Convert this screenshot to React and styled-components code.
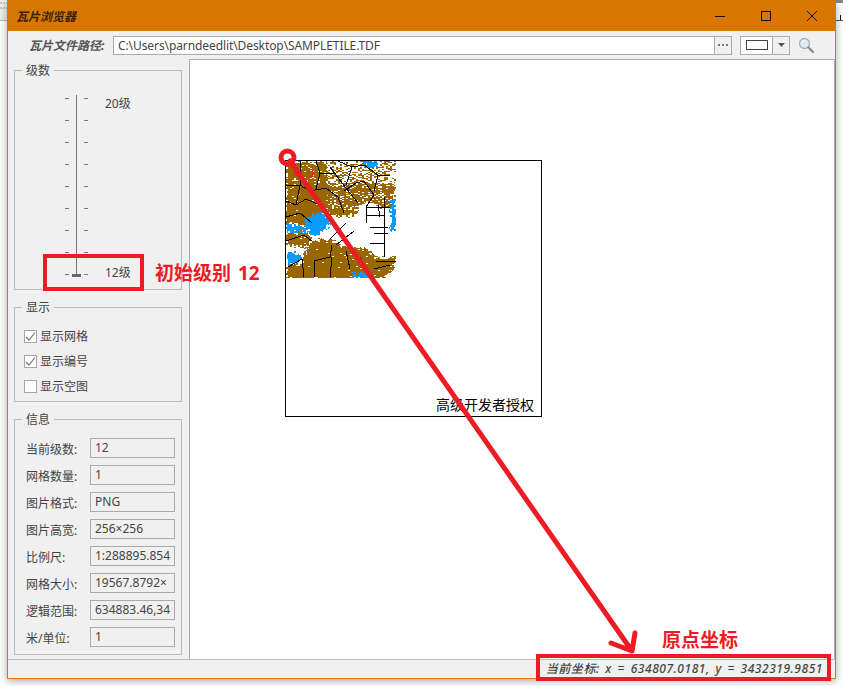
import styled, { createGlobalStyle } from "styled-components";

const sans = `"Noto Sans", "Noto Sans CJK SC", sans-serif`;

const infoRows = [
  ["当前级数:", "12"],
  ["网格数量:", "1"],
  ["图片格式:", "PNG"],
  ["图片高宽:", "256×256"],
  ["比例尺:", "1:288895.854"],
  ["网格大小:", "19567.8792×"],
  ["逻辑范围:", "634883.46,34"],
  ["米/单位:", "1"],
];

const checks = [
  ["显示网格", true],
  ["显示编号", true],
  ["显示空图", false],
];

// rough shapes of the tile picture, in tile pixels
const brownAreas = [
  [[0, 0], [41, 0], [51, 21], [68, 40], [72, 52], [54, 56], [39, 50], [28, 56], [24, 62], [0, 63]],
  [[41, 0], [110, 0], [110, 22], [105, 49], [94, 45], [79, 40], [71, 46], [68, 40], [51, 21]],
  [[20, 86], [24, 80], [44, 77], [56, 85], [66, 86], [81, 88], [90, 96], [110, 96], [106, 108], [98, 117], [0, 117], [0, 104], [16, 103]],
  [[0, 72], [18, 70], [24, 76], [20, 86], [0, 83]],
];

const blueAreas = [
  [[0, 63], [18, 65], [28, 63], [18, 70], [0, 70]],
  [[18, 58], [34, 51], [46, 59], [39, 68], [31, 74], [24, 74], [18, 63]],
  [[0, 91], [8, 91], [16, 96], [8, 103], [0, 103]],
  [[104, 38], [109, 38], [109, 69], [104, 69]],
  [[78, 0], [91, 0], [88, 7], [79, 5]],
  [[64, 112], [84, 110], [88, 117], [68, 117]],
];

const roads = [
  "M0 24H14L24 30L40 27L52 36L58 52",
  "M14 0V24L10 44",
  "M30 0L34 12L30 28",
  "M44 6L56 22L72 42",
  "M52 0L66 6L78 4L92 14L104 14",
  "M66 6L60 24",
  "M78 20L88 34L80 46L80 62",
  "M80 46H104",
  "M80 54H98",
  "M84 66H102",
  "M98 36V96",
  "M92 44L94 56",
  "M88 72H102",
  "M84 82H98",
  "M60 62L44 78",
  "M68 70L50 84",
  "M0 56L14 52L26 62",
  "M0 80L18 74L26 80",
  "M2 106L16 98L18 116",
  "M28 100L44 96L46 84",
  "M46 96L44 116",
  "M28 100V116",
  "M60 90L64 108",
  "M74 96L82 112",
  "M90 100H110",
  "M20 38L34 44L48 66",
  "M92 14L88 30",
  "M0 40L10 44L20 38",
  "M58 30L70 22L78 20",
  "M34 12H50",
  "M88 108L104 104",
];

const noise = (x, y, seed = 1) => {
  const v = Math.sin(x * 12.9898 + y * 78.233 + seed * 37.719) * 43758.5453;
  return v - Math.floor(v);
};

const inside = (poly, x, y) => {
  let hit = false;
  for (let i = 0, j = poly.length - 1; i < poly.length; j = i++) {
    const [ax, ay] = poly[i];
    const [bx, by] = poly[j];
    if (ay > y !== by > y && x < ((bx - ax) * (y - ay)) / (by - ay) + ax) hit = !hit;
  }
  return hit;
};

const tilePixel = (x, y) => {
  const sx = x + (noise(x >> 1, y >> 1, 2) - 0.5) * 4;
  const sy = y + (noise(x >> 1, y >> 1, 3) - 0.5) * 4;
  if (blueAreas.some((p) => inside(p, sx, sy))) return "blue";
  if (brownAreas.some((p) => inside(p, sx, sy))) {
    // top of the tile is much more broken up than the bottom, holes come in clumps
    let holes = 0.02;
    if (y < 22) holes = x > 40 ? 0.62 : 0.1;
    else if (y < 50) holes = x > 40 ? 0.2 : 0.03;
    return noise(x >> 1, y, 4) < holes ? "" : "brown";
  }
  return "";
};

const buildRuns = () => {
  const runs = { brown: "", blue: "" };
  for (let y = 0; y < 117; y++) {
    let start = 0;
    let current = "";
    for (let x = 0; x <= 110; x++) {
      const px = x < 110 ? tilePixel(x, y) : "";
      if (px !== current) {
        if (current) runs[current] += `M${start} ${y}H${x}V${y + 1}H${start}Z`;
        start = x;
        current = px;
      }
    }
  }
  return runs;
};

const tileRuns = buildRuns();

function TileMap() {
  return (
    <MapPicture viewBox="0 0 110 117" width="110" height="117">
      <path d={tileRuns.brown} fill="#996600" />
      <path d={tileRuns.blue} fill="#0a9bff" />
      {roads.map((d) => (
        <path key={d} d={d} fill="none" stroke="#000" strokeWidth="1" />
      ))}
      <rect x="8.5" y="8.5" width="3" height="6" fill="none" stroke="#e22" />
      <rect x="23.5" y="8.5" width="3" height="7" fill="none" stroke="#e22" />
    </MapPicture>
  );
}

export default function App() {
  const ticks = Array.from({ length: 9 }, (_, i) => i);
  return (
    <>
      <GlobalStyle />
      <Page>
        <Backdrop viewBox="0 0 843 24" width="843" height="24">
          <path d="M0 0H7V21H0Z" fill="#eee" />
          <path d="M0 3H7M0 8H7" stroke="#8aa" strokeDasharray="2 1" />
          <path d="M0 20.5H7" stroke="#bbb" />
          <path d="M836 0H843V3H836Z" fill="#888" />
          <path d="M836 20.5H843" stroke="#555" />
          <path d="M840.5 15V20" stroke="#111" />
        </Backdrop>
        <Window>
          <TitleBar>
            <Title>瓦片浏览器</Title>
            <WindowButtons>
              <svg width="46" height="30" viewBox="0 0 46 30">
                <path d="M18 15.5H28" stroke="#111" />
              </svg>
              <svg width="46" height="30" viewBox="0 0 46 30">
                <rect x="18.5" y="10.5" width="9" height="9" fill="none" stroke="#111" />
              </svg>
              <svg width="46" height="30" viewBox="0 0 46 30">
                <path d="M18 10L28 20M28 10L18 20" stroke="#111" />
              </svg>
            </WindowButtons>
          </TitleBar>
          <Toolbar>
            <PathLabel>瓦片文件路径:</PathLabel>
            <PathBox>
              <PathText>C:\Users\parndeedlit\Desktop\SAMPLETILE.TDF</PathText>
              <DotsButton>
                <svg width="11" height="3" viewBox="0 0 11 3">
                  <path d="M0 0h2v2H0zM4 0h2v2H4zM8 0h2v2H8z" fill="#777" />
                </svg>
              </DotsButton>
            </PathBox>
            <Combo>
              <ComboValue>
                <ComboSwatch />
              </ComboValue>
              <ComboArrow>
                <svg width="7" height="4" viewBox="0 0 7 4">
                  <path d="M0 0H7L3.5 4Z" fill="#555" />
                </svg>
              </ComboArrow>
            </Combo>
            <SearchIcon viewBox="0 0 16 17" width="16" height="17">
              <circle cx="6.5" cy="6.5" r="5" fill="#dfeaf3" stroke="#9fb2c2" strokeWidth="1.3" />
              <path d="M3.5 5.5a3.4 3.4 0 0 1 3-2" fill="none" stroke="#fff" />
              <path d="M10.5 10.5L15 15" stroke="#8b8b8b" strokeWidth="2.2" strokeLinecap="round" />
            </SearchIcon>
          </Toolbar>
          <Main>
            <Sidebar>
              <Group $height={220}>
                <Legend>级数</Legend>
                <Slider>
                  <TickColumn>
                    {ticks.map((t) => (
                      <Tick key={t} />
                    ))}
                  </TickColumn>
                  <Track>
                    <Thumb />
                  </Track>
                  <TickColumn>
                    {ticks.map((t) => (
                      <Tick key={t} />
                    ))}
                  </TickColumn>
                  <LevelLabels>
                    <span>20级</span>
                    <span>12级</span>
                  </LevelLabels>
                </Slider>
              </Group>
              <Group $height={95}>
                <Legend>显示</Legend>
                <CheckList>
                  {checks.map(([label, on]) => (
                    <CheckRow key={label}>
                      <CheckBox>
                        {on && (
                          <svg width="11" height="11" viewBox="0 0 11 11">
                            <path d="M1 6L4 9L10 1.5" fill="none" stroke="#777" strokeWidth="1.2" />
                          </svg>
                        )}
                      </CheckBox>
                      <CheckText>{label}</CheckText>
                    </CheckRow>
                  ))}
                </CheckList>
              </Group>
              <Group $height={236}>
                <Legend>信息</Legend>
                <InfoList>
                  {infoRows.map(([label, value]) => (
                    <InfoRow key={label}>
                      <InfoLabel>{label}</InfoLabel>
                      <InfoValue>{value}</InfoValue>
                    </InfoRow>
                  ))}
                </InfoList>
              </Group>
            </Sidebar>
            <Canvas>
              <Tile>
                <TileMap />
                <TileCaption>高级开发者授权</TileCaption>
              </Tile>
            </Canvas>
          </Main>
          <StatusBar>当前坐标: x = 634807.0181, y = 3432319.9851</StatusBar>
        </Window>

        <Arrow viewBox="0 0 843 686" width="843" height="686">
          <circle cx="287.5" cy="157.5" r="6.5" fill="none" stroke="#ed1c24" strokeWidth="5" />
          <path
            d="M290 161L632 651M635 633L632 651L611 643"
            fill="none"
            stroke="#ed1c24"
            strokeWidth="5"
            strokeLinecap="round"
            strokeLinejoin="round"
          />
        </Arrow>
        <LevelMark />
        <LevelNote>初始级别 12</LevelNote>
        <OriginNote>原点坐标</OriginNote>
        <StatusMark />
      </Page>
    </>
  );
}

const GlobalStyle = createGlobalStyle`
  html, body {
    margin: 0;
    padding: 0;
    background: #fff;
  }
  body {
    font-family: ${sans};
    font-size: 12px;
    color: #333;
  }
`;

const Page = styled.div`
  position: relative;
  width: 843px;
  height: 686px;
  overflow: hidden;
  padding-left: 7px;
  box-sizing: border-box;
`;

const Backdrop = styled.svg`
  position: absolute;
  left: 0;
  top: 0;
`;

const Window = styled.div`
  position: relative;
  width: 829px;
  height: 679px;
  box-sizing: border-box;
  border: 1px solid #d87700;
  border-top: 0;
  background: #f0f0f0;
  box-shadow: 0 2px 8px rgba(0, 0, 0, 0.35);
  display: flex;
  flex-direction: column;
`;

const TitleBar = styled.div`
  height: 31px;
  flex: none;
  background: #d87700;
  display: flex;
  align-items: center;
  justify-content: space-between;
`;

const Title = styled.div`
  margin-left: 8px;
  font-size: 12px;
  font-weight: 700;
  font-style: italic;
  color: #3c2200;
`;

const WindowButtons = styled.div`
  display: flex;
  svg {
    display: block;
  }
`;

const Toolbar = styled.div`
  height: 28px;
  flex: none;
  display: flex;
  align-items: center;
  padding-left: 21px;
`;

const PathLabel = styled.div`
  width: 84px;
  flex: none;
  font-weight: 700;
  font-style: italic;
  color: #555;
  white-space: nowrap;
`;

const PathBox = styled.div`
  width: 619px;
  height: 19px;
  box-sizing: border-box;
  flex: none;
  display: flex;
  background: #fff;
  border: 1px solid #a9a9a9;
`;

const PathText = styled.div`
  flex: 1;
  padding-left: 4px;
  line-height: 17px;
  letter-spacing: -0.09px;
  color: #444;
  font-size: 12px;
`;

const DotsButton = styled.div`
  width: 16px;
  flex: none;
  background: #f0f0f0;
  border-left: 1px solid #a9a9a9;
  display: flex;
  align-items: center;
  justify-content: center;
`;

const Combo = styled.div`
  width: 50px;
  height: 19px;
  box-sizing: border-box;
  flex: none;
  margin-left: 8px;
  display: flex;
  border: 1px solid #a9a9a9;
`;

const ComboValue = styled.div`
  flex: 1;
  background: #fff;
  display: flex;
  align-items: center;
  justify-content: center;
`;

const ComboSwatch = styled.div`
  width: 22px;
  height: 10px;
  box-sizing: border-box;
  border: 1px solid #444;
  background: #fff;
`;

const ComboArrow = styled.div`
  width: 16px;
  flex: none;
  border-left: 1px solid #a9a9a9;
  display: flex;
  align-items: center;
  justify-content: center;
`;

const SearchIcon = styled.svg`
  margin-left: 8px;
  flex: none;
`;

const Main = styled.div`
  flex: 1;
  min-height: 0;
  display: flex;
`;

const Sidebar = styled.div`
  width: 181px;
  flex: none;
  box-sizing: border-box;
  padding: 11px 0 0 6px;
  display: flex;
  flex-direction: column;
  gap: 17px;
`;

const Group = styled.div`
  position: relative;
  width: 168px;
  height: ${(p) => p.$height}px;
  box-sizing: border-box;
  flex: none;
  border: 1px solid #bbb;
`;

const Legend = styled.div`
  position: absolute;
  top: -9px;
  left: 7px;
  padding: 0 4px;
  background: #f0f0f0;
  line-height: 17px;
  color: #444;
`;

const Slider = styled.div`
  height: 177px;
  margin-top: 27px;
  margin-left: 50px;
  display: flex;
`;

const TickColumn = styled.div`
  width: 4px;
  display: flex;
  flex-direction: column;
  justify-content: space-between;
`;

const Tick = styled.div`
  height: 1px;
  background: #777;
`;

const Track = styled.div`
  position: relative;
  width: 1px;
  margin: -3px 7px 0;
  background: #777;
`;

const Thumb = styled.div`
  position: absolute;
  left: -4px;
  bottom: -2px;
  width: 9px;
  height: 3px;
  background: #666;
`;

const LevelLabels = styled.div`
  margin: -1px 0 -5px 17px;
  display: flex;
  flex-direction: column;
  justify-content: space-between;
  color: #444;
  white-space: nowrap;
  line-height: 14px;
`;

const CheckList = styled.div`
  padding: 21px 0 0 9px;
  display: flex;
  flex-direction: column;
  gap: 11px;
`;

const CheckRow = styled.div`
  height: 14px;
  display: flex;
  align-items: center;
  gap: 3px;
  color: #444;
  line-height: 14px;
`;

const CheckText = styled.span`
  padding-top: 1px;
`;

const CheckBox = styled.div`
  width: 13px;
  height: 13px;
  box-sizing: border-box;
  border: 1px solid #a5a5a5;
  background: #fff;
  display: flex;
  align-items: center;
  justify-content: center;
`;

const InfoList = styled.div`
  padding: 18px 0 0 11px;
  display: flex;
  flex-direction: column;
  gap: 7px;
`;

const InfoRow = styled.div`
  height: 20px;
  display: flex;
  align-items: center;
`;

const InfoLabel = styled.div`
  width: 64px;
  flex: none;
  padding-top: 2px;
  color: #444;
  white-space: nowrap;
`;

const InfoValue = styled.div`
  width: 85px;
  height: 20px;
  box-sizing: border-box;
  flex: none;
  border: 1px solid #a9a9a9;
  padding-left: 4px;
  white-space: nowrap;
  line-height: 18px;
  color: #444;
`;

const Canvas = styled.div`
  flex: 1;
  min-width: 0;
  box-sizing: border-box;
  background: #fff;
  border: 1px solid #aaa;
  border-bottom: 0;
  padding: 100px 0 0 95px;
`;

const Tile = styled.div`
  width: 257px;
  height: 257px;
  box-sizing: border-box;
  border: 1px solid #000;
  display: flex;
  flex-direction: column;
`;

const MapPicture = styled.svg`
  display: block;
  flex: none;
  shape-rendering: crispEdges;
`;

const TileCaption = styled.div`
  margin-top: auto;
  padding: 0 7px 2px 0;
  text-align: right;
  font-size: 14px;
  line-height: 18px;
  color: #000;
`;

const StatusBar = styled.div`
  height: 19px;
  flex: none;
  box-sizing: border-box;
  border-top: 1px solid #bbb;
  padding-right: 12px;
  text-align: right;
  line-height: 18px;
  font-style: italic;
  font-weight: 500;
  letter-spacing: 0.55px;
  word-spacing: 2px;
  color: #444;
  white-space: nowrap;
`;

const Arrow = styled.svg`
  position: absolute;
  left: 0;
  top: 0;
  pointer-events: none;
`;

const LevelMark = styled.div`
  position: absolute;
  left: 43px;
  top: 254px;
  width: 101px;
  height: 37px;
  box-sizing: border-box;
  border: 4px solid #ed1c24;
`;

const StatusMark = styled.div`
  position: absolute;
  left: 536px;
  top: 654px;
  width: 295px;
  height: 27px;
  box-sizing: border-box;
  border: 4px solid #ed1c24;
`;

const LevelNote = styled.div`
  position: absolute;
  left: 155px;
  top: 260px;
  font-size: 19px;
  font-weight: 700;
  line-height: 26px;
  word-spacing: 2px;
  color: #ed1c24;
  white-space: nowrap;
`;

const OriginNote = styled.div`
  position: absolute;
  left: 662px;
  top: 627px;
  font-size: 19px;
  font-weight: 700;
  line-height: 26px;
  color: #ed1c24;
  white-space: nowrap;
`;
